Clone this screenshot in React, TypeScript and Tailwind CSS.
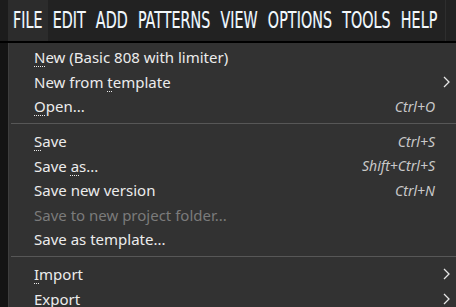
const menus = ["FILE", "EDIT", "ADD", "PATTERNS", "VIEW", "OPTIONS", "TOOLS", "HELP"];

type Item =
  | { sep: true }
  | { sep?: false; label: React.ReactNode; shortcut?: string; sub?: boolean; disabled?: boolean };

const M = ({ children }: { children: React.ReactNode }) => (
  <span className="underline decoration-dotted decoration-1 underline-offset-[3px]">{children}</span>
);

const items: Item[] = [
  { label: <><M>N</M>ew (Basic 808 with limiter)</> },
  { label: <>New from <M>t</M>emplate</>, sub: true },
  { label: <><M>O</M>pen...</>, shortcut: "Ctrl+O" },
  { sep: true },
  { label: <><M>S</M>ave</>, shortcut: "Ctrl+S" },
  { label: <>Save <M>a</M>s...</>, shortcut: "Shift+Ctrl+S" },
  { label: "Save new version", shortcut: "Ctrl+N" },
  { label: "Save to new project folder...", disabled: true },
  { label: "Save as template..." },
  { sep: true },
  { label: <><M>I</M>mport</>, sub: true },
  { label: "Export", sub: true },
];

function Chevron() {
  return (
    <svg width="7" height="12" viewBox="0 0 7 12" className="absolute right-[6px]">
      <polyline points="1,1 6,6 1,11" fill="none" stroke="#e6e6e6" strokeWidth="1.3" />
    </svg>
  );
}

export default function App() {
  return (
    <div className="w-[456px] h-[307px] overflow-hidden bg-[#161616] flex flex-col font-['Noto_Sans',sans-serif]">
      {/* menu bar */}
      <div className="h-[41px] shrink-0 flex bg-[#222222]">
        <div className="w-[8px] shrink-0 bg-[#1c1c1c]" />
        <div className="flex items-stretch shrink-0 font-['Liberation_Sans_Narrow','DejaVu_Sans_Condensed',sans-serif] text-[16px] text-[#f4f8fb]">
          {menus.map((m, i) => (
            <div
              key={m}
              className={`flex items-center px-[5px] ${i === 0 ? "bg-[#2c2c2c]" : ""}`}
            >
              <span className="inline-block scale-y-[1.42] [text-shadow:-0.5px_0_0_rgba(110,190,255,0.35)]">{m}</span>
            </div>
          ))}
        </div>
        <div className="flex-1" />
        <div className="w-px shrink-0 bg-[#2e2e2e] mr-[10px]" />
      </div>
      <div className="h-[2px] bg-black shrink-0" />

      <div className="flex flex-1">
        <div className="w-[8px] shrink-0 bg-[#141414]" />
        {/* dropdown */}
        <div className="flex-1 bg-[#323232] border-l border-[#3e3e3e] pt-[2px] text-[15px] text-[#ececec]">
          {items.map((it, i) =>
            it.sep ? (
              <div key={i} className="h-[10.5px] flex items-center pl-[2px]">
                <div className="h-px w-full bg-[#575757]" />
              </div>
            ) : (
              <div key={i} className="relative h-[24.5px] flex items-center pl-[25px] pr-[12px]">
                <span className={it.disabled ? "text-[#7b7b7b]" : ""}>{it.label}</span>
                {it.shortcut && (
                  <span className="ml-auto mr-[9px] italic text-[14px] text-[#c9c9c9]">{it.shortcut}</span>
                )}
                {it.sub && <Chevron />}
              </div>
            )
          )}
        </div>
      </div>
    </div>
  );
}
